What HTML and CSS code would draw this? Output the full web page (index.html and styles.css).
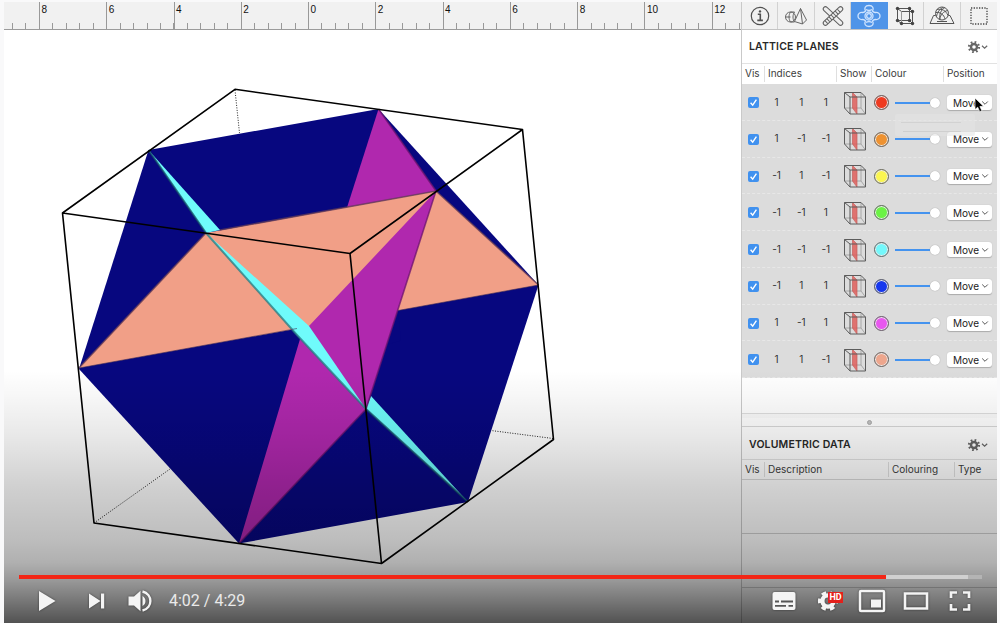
FILE: index.html
```
<!DOCTYPE html>
<html lang="en">
<head>
<meta charset="utf-8">
<title>Lattice planes</title>
<link rel="stylesheet" href="styles.css">
</head>
<body>
<svg class="defs" width="0" height="0" aria-hidden="true">
  <symbol id="gear" viewBox="0 0 24 16">
    <circle cx="7" cy="8" r="3" fill="none" stroke="#666" stroke-width="2.400"/>
    <circle cx="7" cy="8" r="5" fill="none" stroke="#666" stroke-width="2.200" stroke-dasharray="1.700 2.227"/>
    <path d="M15 6.800l2.600 2.400L20.200 6.800" fill="none" stroke="#666" stroke-width="1.200"/>
  </symbol>
  <symbol id="cube" viewBox="0 0 24 24">
    <path d="M1.500 17H18v-15.500M18 17l4.500 6" fill="none" stroke="#999" stroke-width=".8"/>
    <path d="M9.500 1.500l4.500 4.500v17L9.500 17z" fill="#e0605d" stroke="#c34b48" stroke-width=".7" opacity=".85"/>
    <path d="M1.500 1.500h16.500l4.500 4.500v17H7L1.500 17zM1.500 1.500L7 6h15.500M7 6v17" fill="none" stroke="#5c5c5c" stroke-width="1"/>
  </symbol>
  <symbol id="chev" viewBox="0 0 8 6"><path d="M1.200 1.500L4 4.300l2.800-2.800" fill="none" stroke="#555" stroke-width="1"/></symbol>
  <symbol id="tick" viewBox="0 0 11 11"><path d="M2.600 5.800l2.100 2.400L8.400 2.700" fill="none" stroke="#fff" stroke-width="1.400"/></symbol>
</svg>
<main class="player">
  <section class="scene">
    <div class="ruler"><span class="lead"></span><span>8</span><span>6</span><span>4</span><span>2</span><span>0</span><span>2</span><span>4</span><span>6</span><span>8</span><span>10</span><span class="last">12</span></div>
    <svg class="view" viewBox="4 30 737 593" width="737" height="593">
      <g fill="none" stroke="#222" stroke-width="1" stroke-dasharray="1 1.500">
        <path d="M235 90l4.500 43M94 523l76-54M553 438.500l-62-8"/>
      </g>
      <path fill="#07077f" d="M148.500 150L378.500 109 538.500 285 468 502 239 543.500 79 369z"/>
      <path fill="#b028ae" d="M378.500 109L436 191 347 207.500z"/>
      <path fill="#f19f87" d="M206 233L436 191 538.500 285 79 368z"/>
      <path fill="#07077f" d="M303 328.500l5-1 90-17 3 30-98 30z"/>
      <path fill="#b028ae" d="M436 191L366 409 239 543.500 303 329 309 326z"/>
      <path fill="#6ffbfb" d="M148.500 150L220 230 206 233z"/>
      <path fill="#6ffbfb" d="M206 233L309 326 366 409 297 335z"/>
      <path fill="#6ffbfb" d="M371 396L468 502 366 409z"/>
      <g fill="none" stroke-width="1.600" opacity=".75">
        <path stroke="#134f68" stroke-width="2" d="M148.500 150L206 233M366 409L468 502"/>
        <path stroke="#257c83" stroke-width="2" d="M206 233L297 335 366 409"/>
        <path stroke="#633b55" d="M79 368L206 233M220 230L436 191 538.500 285"/>
        <path stroke="#6d156f" d="M378.500 109L436 191 366 409 239 543.500"/>
        <path stroke="#402d55" stroke-width=".8" d="M79 368L297 328.500M398 310.500L538.500 285"/>
      </g>
      <path fill="none" stroke="#000" stroke-width="1.600" stroke-linejoin="round" d="M62.500 213L235 89.300 522.500 129.500 350 253.500zM62.500 213L94 523 381.500 563.500 350 253.500M381.500 563.500L553.500 439.500 522.500 129.500"/>
    </svg>
  </section>

  <aside class="panel">
    <nav class="tools">
      <span><svg width="20" height="20" viewBox="0 0 20 20" fill="none" stroke="#505050" stroke-width="1.200"><circle cx="10" cy="10" r="8.700"/><path d="M7.800 8.300h2.500v6M7.300 14.400h5.600" stroke-width="1.600"/><circle cx="10" cy="5.400" r="1.200" fill="#505050" stroke="none"/></svg></span>
      <span><svg width="26" height="20" viewBox="0 0 26 20" fill="none" stroke="#666" stroke-width="1"><circle cx="7.500" cy="11" r="5"/><path d="M7.500 6c-2 3-2 7 0 10M2.500 11h5M7.500 6h4M7.500 16h4M11.500 6c-2 3-2 7 0 10M17.500 2.500L11.500 15.500l8 2.500 4-4zM17.500 2.500L19.500 18"/></svg></span>
      <span><svg width="22" height="20" viewBox="0 0 22 20" fill="none" stroke="#606060"><path d="M3.500 3L18.500 17" stroke-width="5.500" stroke-linecap="round"/><path d="M3.500 3L18.500 17" stroke="#eee" stroke-width="3.500" stroke-linecap="round"/><path d="M3.500 17L18.500 3" stroke-width="5.500" stroke-linecap="round"/><path d="M3.500 17L18.500 3" stroke="#eee" stroke-width="3.500" stroke-linecap="round"/><path d="M4 16.500L18 3.500" stroke-width="4" stroke-dasharray="1 1.800"/></svg></span>
      <span class="active"><svg width="24" height="24" viewBox="0 0 24 24" fill="none" stroke="#cfe4ff" stroke-width="1.300"><path d="M8.500 7C7 4.500 8 1.500 12 1.500s5 3 3.500 5.500c1 1.300 2 1.600 3 1.500 3-.3 4.500 1.500 4.500 3.500s-1.500 3.800-4.500 3.500c-1-.1-2 .2-3 1.500 1.500 2.500.5 5.500-3.500 5.500s-5-3-3.500-5.500c-1-1.300-2-1.600-3-1.500C2.500 15.800 1 14 1 12s1.500-3.800 4.500-3.500c1 .1 2-.2 3-1.500z"/><circle cx="12" cy="12" r="4"/><circle cx="12" cy="12" r="2.300"/><path d="M9 5.500c1.500 1.300 4.500 1.300 6 0M9 18.500c1.500-1.300 4.500-1.300 6 0"/></svg></span>
      <span><svg width="20" height="20" viewBox="0 0 20 20"><path d="M2.500 2.500h12v12h-12zM2.500 2.500l4 3h11v12M14.500 2.500l3 3M14.500 14.500l3 3h-11l-4-3" fill="none" stroke="#555"/><path d="M6.500 5.500v12" stroke="#999"/><g fill="#444"><circle cx="2.500" cy="2.500" r="1.700"/><circle cx="14.500" cy="2.500" r="1.700"/><circle cx="2.500" cy="14.500" r="1.700"/><circle cx="14.500" cy="14.500" r="1.700"/><circle cx="17.500" cy="5.500" r="1.700"/><circle cx="6.500" cy="17.500" r="1.700"/><circle cx="17.500" cy="17.500" r="1.700"/></g></svg></span>
      <span><svg width="26" height="20" viewBox="0 0 26 20" fill="none" stroke="#555" stroke-width="1"><path d="M6.500 9.500H4.500L1 17.500h24l-4-8h-1.500"/><circle cx="13" cy="7.500" r="6.500"/><path d="M8 3.500c5-1 9 1 11 6M7 6.500c4-.5 8 2 9 6.500M11 13.500c-1-5 1-10 5-12M7.500 10.500c1-5 3-7 6.500-9M18.500 4.500c-4 1-7 4-8 9M8 15.500h10"/></svg></span>
      <span><svg width="20" height="20" viewBox="0 0 20 20"><path d="M2 2h16v16H2z" fill="none" stroke="#444" stroke-width="1.300" stroke-dasharray="1.300 1.367"/></svg></span>
    </nav>
    <header class="title"><h2>LATTICE PLANES</h2><svg width="24" height="16"><use href="#gear"/></svg></header>
    <div class="head planes"><span>Vis</span><span>Indices</span><span>Show</span><span>Colour</span><span>Position</span></div>
    <div class="rows">
      <div class="row"><i class="box"><svg width="11" height="11"><use href="#tick"/></svg></i><b>1</b><b>1</b><b>1</b><svg class="cube"><use href="#cube"/></svg><i class="dot red"></i><i class="slider"></i><button>Move<svg width="8" height="6"><use href="#chev"/></svg></button></div>
      <div class="row"><i class="box"><svg width="11" height="11"><use href="#tick"/></svg></i><b>1</b><b>-1</b><b>-1</b><svg class="cube"><use href="#cube"/></svg><i class="dot orange"></i><i class="slider"></i><button>Move<svg width="8" height="6"><use href="#chev"/></svg></button></div>
      <div class="row"><i class="box"><svg width="11" height="11"><use href="#tick"/></svg></i><b>-1</b><b>1</b><b>-1</b><svg class="cube"><use href="#cube"/></svg><i class="dot yellow"></i><i class="slider"></i><button>Move<svg width="8" height="6"><use href="#chev"/></svg></button></div>
      <div class="row"><i class="box"><svg width="11" height="11"><use href="#tick"/></svg></i><b>-1</b><b>-1</b><b>1</b><svg class="cube"><use href="#cube"/></svg><i class="dot green"></i><i class="slider"></i><button>Move<svg width="8" height="6"><use href="#chev"/></svg></button></div>
      <div class="row"><i class="box"><svg width="11" height="11"><use href="#tick"/></svg></i><b>-1</b><b>-1</b><b>-1</b><svg class="cube"><use href="#cube"/></svg><i class="dot cyan"></i><i class="slider"></i><button>Move<svg width="8" height="6"><use href="#chev"/></svg></button></div>
      <div class="row"><i class="box"><svg width="11" height="11"><use href="#tick"/></svg></i><b>-1</b><b>1</b><b>1</b><svg class="cube"><use href="#cube"/></svg><i class="dot blue"></i><i class="slider"></i><button>Move<svg width="8" height="6"><use href="#chev"/></svg></button></div>
      <div class="row"><i class="box"><svg width="11" height="11"><use href="#tick"/></svg></i><b>1</b><b>-1</b><b>1</b><svg class="cube"><use href="#cube"/></svg><i class="dot magenta"></i><i class="slider"></i><button>Move<svg width="8" height="6"><use href="#chev"/></svg></button></div>
      <div class="row"><i class="box"><svg width="11" height="11"><use href="#tick"/></svg></i><b>1</b><b>1</b><b>-1</b><svg class="cube"><use href="#cube"/></svg><i class="dot salmon"></i><i class="slider"></i><button>Move<svg width="8" height="6"><use href="#chev"/></svg></button></div>
    </div>
    <div class="blank"></div>
    <div class="splitter"><i></i></div>
    <header class="title second"><h2>VOLUMETRIC DATA</h2><svg width="24" height="16"><use href="#gear"/></svg></header>
    <div class="head volume"><span>Vis</span><span>Description</span><span>Colouring</span><span>Type</span></div>
    <div class="empty"></div>
    <div class="empty"></div>
    <div class="ghost"></div>
    <svg class="cursor" width="12" height="16" viewBox="0 0 12 16"><path d="M2 1v11.500l2.700-2.300 2 4.500 2.200-1-2-4.200 3.600-.3z" fill="#000" stroke="#fff" stroke-width=".7"/></svg>
  </aside>

  <div class="shade"></div>
  <div class="controls">
    <div class="progress"><i class="played"></i><i class="loaded"></i><i class="rest"></i></div>
    <div class="bar">
      <svg class="play" width="18" height="22" viewBox="0 0 18 22"><path d="M1 1l16.500 10L1 21z"/></svg>
      <svg class="next" width="18" height="18" viewBox="0 0 18 18"><path d="M1 1.500l11.500 7.500L1 16.500zM13 1.500h3.200v15H13z"/></svg>
      <svg class="volume-icon" width="24" height="22" viewBox="0 0 24 22"><path d="M.5 6.500H6L12.500.8v20.400L6 15.500H.5z"/><path d="M14.500 6c4 2 4 8 0 10z"/><path d="M14.500 1.500c10.500 2.500 10.500 16.500 0 19" fill="none" stroke="#f4f4f4" stroke-width="2.400"/></svg>
      <span class="time">4:02 / 4:29</span>
      <span class="spacer"></span>
      <svg class="cc" width="24" height="20" viewBox="0 0 24 20"><rect x=".5" y="1" width="23" height="18" rx="2"/><path d="M3 10.500h4M9 10.500h12M3 14.800h11M16.500 14.800h4.500" stroke="#555" stroke-width="1.800"/></svg>
      <span class="settings"><svg width="22" height="22" viewBox="0 0 22 22"><circle cx="11" cy="11" r="5.600" fill="none" stroke="#f4f4f4" stroke-width="4.300"/><circle cx="11" cy="11" r="8.500" fill="none" stroke="#f4f4f4" stroke-width="3.200" stroke-dasharray="4.600 4.300" stroke-dashoffset="2.300"/></svg><em>HD</em></span>
      <svg class="mini" width="28" height="24" viewBox="0 0 28 24"><rect x="2" y="2" width="24" height="20" rx="1" fill="none" stroke="#f4f4f4" stroke-width="2.500"/><path d="M13 10.500h10v8H13z"/></svg>
      <svg class="theater" width="26" height="20" viewBox="0 0 26 20"><path d="M2 2.500h22v15H2z" fill="none" stroke="#f4f4f4" stroke-width="2.600"/></svg>
      <svg class="full" width="22" height="22" viewBox="0 0 22 22"><path d="M2 8V2.500h6M14 2.500h6V8M20 14v5.500h-6M8 19.500H2V14" fill="none" stroke="#f4f4f4" stroke-width="2.700"/></svg>
    </div>
  </div>
</main>
</body>
</html>
```
FILE: styles.css
```
* { box-sizing: border-box; }
body { margin: 0; width: 1000px; height: 623px; overflow: hidden; background: #f9f9fa; font-family: Inter, "Liberation Sans", sans-serif; }
.defs { position: absolute; }
svg { display: block; flex: none; }
.player { position: relative; width: 993px; height: 623px; margin-left: 4px; padding-top: 2px; display: flex; overflow: hidden; }
.scene { width: 737px; background: #fff; display: flex; flex-direction: column; }
.ruler { height: 28px; flex: none; display: flex; overflow: hidden; background: repeating-linear-gradient(90deg, #999 0, #999 1px, transparent 1px, transparent 13.454px) 8.2px 21px / 1500px 7px no-repeat #f1f1f1; border-bottom: 1px solid #9b9b9b; }
.ruler span { width: 67.27px; flex: none; border-left: 1px solid #999; padding: 2px 0 0 1.5px; font: 10px/12px "Liberation Sans", sans-serif; color: #111; }
.ruler .lead { width: 35px; border: 0; }
.view { flex: none; }

.panel { position: relative; width: 256px; border-left: 1px solid #c9c9c9; background: #fff; color: #333; display: flex; flex-direction: column; }
.tools { height: 28px; flex: none; display: grid; grid-template-columns: repeat(7, 1fr); border-bottom: 1px solid #c4c4c4; background: #f1f1f1; }
.tools span { display: flex; align-items: center; justify-content: center; border-right: 1px solid #d2d2d2; }
.tools span:last-child { border: 0; }
.tools .active { background: #4f94e8; border-color: #4f94e8; }
.title { height: 34px; flex: none; display: flex; align-items: center; justify-content: space-between; padding: 1px 6px 0 7px; border-bottom: 1px solid #e2e2e2; }
.title h2 { margin: 0; font-size: 10.5px; line-height: 14px; font-weight: 600; color: #282828; letter-spacing: .15px; }
.head { height: 20px; flex: none; display: grid; font-size: 10px; line-height: 14px; padding: 2px 0; color: #3c3c3c; }
.head span { padding: 0 0 0 3px; border-left: 1px solid #dfdfdf; }
.head span:first-child { border: 0; }
.planes { grid-template-columns: 22px 72px 35px 72px 54px; }
.rows { height: 294px; flex: none; background: #dcdcdc; display: grid; grid-template-rows: repeat(8, 1fr); }
.row { display: grid; grid-template-columns: 22px 25px 24.5px 24.5px 34px 18px 57px 45px; align-items: center; padding-top: 1.4px; border-bottom: 1px dashed #e7e7e7; font-size: 10px; }
.row b { font-weight: 400; text-align: center; color: #333; padding-bottom: 2px; }
.box { width: 11px; height: 11px; margin-left: 6px; border-radius: 2px; background: #4091ef; }
.cube { width: 24px; height: 24px; margin-left: 5px; }
.dot { width: 15px; height: 15px; border: 1px solid #666; border-radius: 50%; margin-left: 2px; box-shadow: inset 0 0 0 1px #e9e9e9; }
.red { background: #ef3a20; }
.orange { background: #ee9231; }
.yellow { background: #fbf650; }
.green { background: #6bf344; }
.cyan { background: #74f8fb; }
.blue { background: #1637ee; }
.magenta { background: #e857ef; }
.salmon { background: #eda68d; }
.slider { width: 45px; height: 10px; margin-left: 5px; display: flex; align-items: center; }
.slider::before { content: ""; width: 35px; height: 2px; background: #4493ef; }
.slider::after { content: ""; width: 10px; height: 10px; border-radius: 50%; background: #fff; box-shadow: 0 0 1px #888; }
.row button { width: 45px; height: 15px; padding: 0 3px 0 6px; border: 0; border-radius: 3px; background: #fff; box-shadow: 0 .5px 1px #aaa; display: flex; align-items: center; justify-content: space-between; font: 10px/14px Inter, sans-serif; color: #222; }
.blank { height: 36px; flex: none; border-bottom: 1px solid #dedede; }
.splitter { height: 13px; flex: none; border-bottom: 1px solid #d8d8d8; display: flex; align-items: center; justify-content: center; border-top: 4px solid #fafafa; }
.splitter i { width: 5px; height: 5px; border-radius: 50%; background: #c2c2c2; border: 1px solid #aaa; }
.second { height: 33px; padding-top: 3px; }
.volume { grid-template-columns: 22px 124px 66px 43px; border-bottom: 1px solid #d8d8d8; }
.empty { height: 54px; flex: none; border-bottom: 1px solid #d0d0d0; }
.ghost { position: absolute; left: 153px; top: 112px; width: 80px; height: 22px; background: linear-gradient(#cfcfcf, #cfcfcf) 8px 17px / 58px 1px no-repeat, linear-gradient(#d2d2d2, #d2d2d2) 6px 8px / 60px 1px no-repeat, #e2e2e288; border-radius: 2px; }
.cursor { position: absolute; left: 231px; top: 95px; }

.shade { position: absolute; inset: 370px 0 0; background: linear-gradient(rgba(0,0,0,0) 0, rgba(0,0,0,.03) 10%, rgba(0,0,0,.09) 26%, rgba(0,0,0,.19) 47%, rgba(0,0,0,.26) 67%, rgba(0,0,0,.31) 76%, rgba(0,0,0,.40) 83%, rgba(0,0,0,.53) 91%, rgba(0,0,0,.68) 100%); }
.controls { position: absolute; inset: 575px 15px 0; }
.progress { height: 4px; display: flex; }
.played { width: 867px; background: #f32616; }
.loaded { width: 82px; background: #d0d0d0; }
.rest { width: 14px; background: #b4b4b4; }
.bar { height: 43px; display: flex; align-items: center; fill: #f4f4f4; padding-left: 19px; padding-right: 11px; }
.bar svg { filter: drop-shadow(0 0 1px rgba(0,0,0,.5)); }
.next { margin-left: 32px; }
.volume-icon { margin-left: 22px; }
.time { margin-left: 17px; font: 16px/20px Roboto, sans-serif; color: #eaeaea; white-space: nowrap; }
.spacer { flex: 1; }
.settings { position: relative; margin-left: 21px; }
.settings em { position: absolute; left: 11px; top: 2px; width: 15px; height: 11px; background: #e4201b; color: #fff; font: 700 9px/11px Roboto, sans-serif; text-align: center; }
.mini { margin-left: 19px; }
.theater { margin-left: 17px; }
.full { margin-left: 20px; }
```
